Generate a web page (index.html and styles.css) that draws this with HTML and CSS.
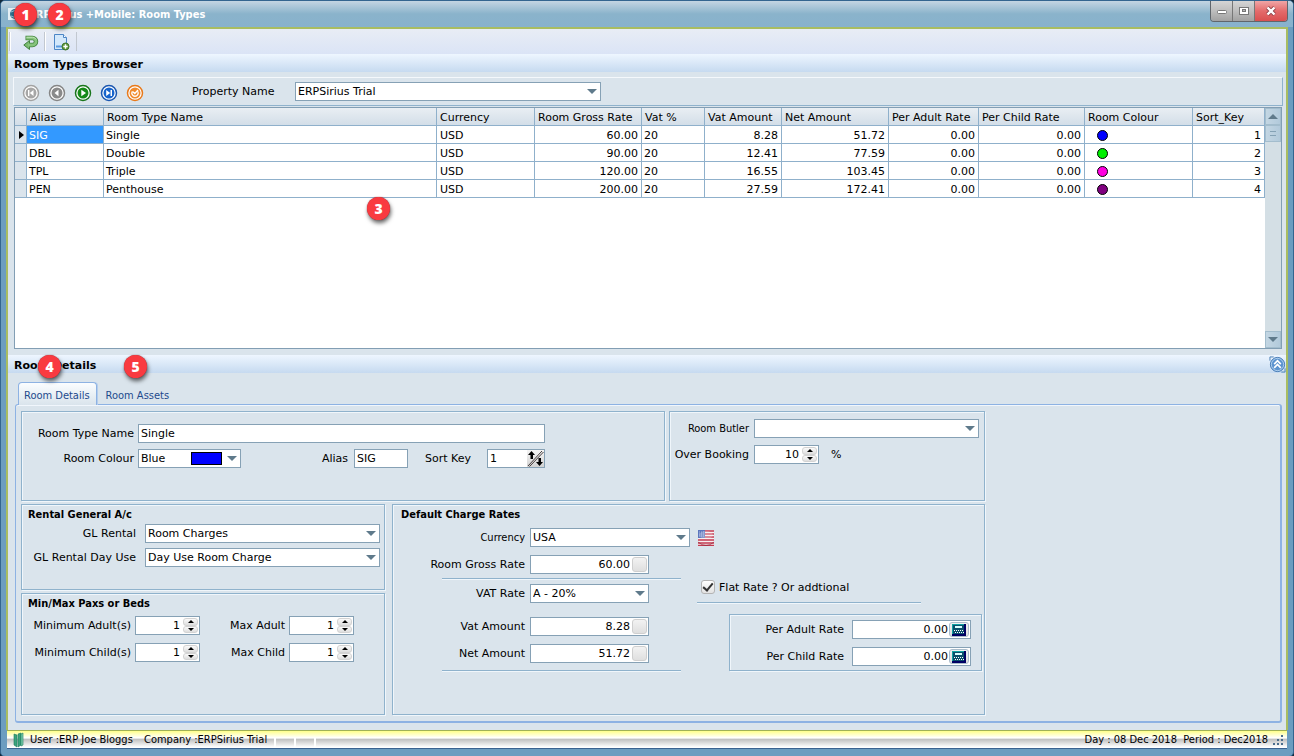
FILE: index.html
```html
<!DOCTYPE html>
<html lang="en">
<head>
<meta charset="UTF-8">
<meta name="viewport" content="width=device-width, initial-scale=1.0">
<title>ERPSirius +Mobile: Room Types</title>
<link rel="stylesheet" href="styles.css">
</head>
<body>
<div class="window">
    <header class="titlebar">
        <svg class="app-icon" width="16" height="16" viewBox="0 0 16 16">
            <rect x="1" y="2" width="14" height="12" fill="#e4eef4"/>
            <circle cx="8" cy="8" r="5" fill="#2f6f8c"/>
            <path d="M4 6q4-3 7 0M4 10q4 3 7 0" stroke="#9cc8da" fill="none"/>
        </svg>
        <h1>ERPSirius +Mobile: Room Types</h1>
        <span class="badge badge-1">1</span>
        <span class="badge badge-2">2</span>
        <div class="window-buttons">
            <button type="button" aria-label="Minimize"><svg width="12" height="12" viewBox="0 0 12 12"><rect x="1.5" y="5.5" width="9" height="3" rx="1" fill="#fff" stroke="#777"/></svg></button>
            <button type="button" aria-label="Maximize"><svg width="12" height="12" viewBox="0 0 12 12"><rect x="1.5" y="2.5" width="9" height="7" fill="#fff" stroke="#777"/><rect x="4.5" y="4.5" width="3" height="2" fill="#bbb" stroke="#777"/></svg></button>
            <button type="button" class="close" aria-label="Close"><svg width="12" height="12" viewBox="0 0 12 12"><path d="M2.500 2.500l7 7M9.500 2.500l-7 7" stroke="#8a4046" stroke-width="4"/><path d="M2.500 2.500l7 7M9.500 2.500l-7 7" stroke="#fff" stroke-width="2.400"/></svg></button>
        </div>
    </header>

    <main class="content">
        <div class="toolbar">
            <button type="button" aria-label="Back">
                <svg width="16" height="16" viewBox="0 0 16 16"><path d="M2.500 4H9.500a3.500 3.500 0 0 1 0 7H5" fill="none" stroke="#43823f" stroke-width="4.500"/><path d="M6.500 6.500V15.500L.8 11z" fill="#79ba6e" stroke="#43823f"/><path d="M3.200 4H9.500a3.500 3.500 0 0 1 0 7H5" fill="none" stroke="#86c47c" stroke-width="2.800"/><path d="M3.500 3.300H9.500a4 4 0 0 1 3.500 2" stroke="#bfe3b6" fill="none"/></svg>
            </button>
            <button type="button" aria-label="New room type">
                <svg width="18" height="18" viewBox="0 0 18 18"><path d="M2.500 1.500h9l3 3v12h-12z" fill="#d3e8fb" stroke="#4c86c6"/><path d="M11.500 1.500v3h3" fill="#fff" stroke="#4c86c6"/><path d="M4 13.500h7" stroke="#5a9ae0" stroke-width="2"/><circle cx="13.500" cy="13.500" r="3.500" fill="#5f9b3c" stroke="#3e742a"/><path d="M13.500 11.300v4.400M11.300 13.500h4.400" stroke="#fff" stroke-width="1.400"/></svg>
            </button>
        </div>

        <h2 class="section-header">Room Types Browser</h2>

        <div class="browser-bar">
            <div class="nav-buttons">
                <button type="button" aria-label="First"><svg width="18" height="18" viewBox="0 0 18 18"><circle cx="9" cy="9" r="7.500" fill="#fff" stroke="#a2a2a2" stroke-width="1.500"/><circle cx="9" cy="9" r="5.500" fill="#a6a6a6"/><path d="M11.500 6v6L7.800 9zM6 6h1.400v6H6z" fill="#fff"/></svg></button>
                <button type="button" aria-label="Previous"><svg width="18" height="18" viewBox="0 0 18 18"><circle cx="9" cy="9" r="7.500" fill="#fff" stroke="#858585" stroke-width="1.500"/><circle cx="9" cy="9" r="5.500" fill="#8a8a8a"/><path d="M10.500 5.700v6.600L6.500 9z" fill="#fff"/></svg></button>
                <button type="button" aria-label="Next"><svg width="18" height="18" viewBox="0 0 18 18"><circle cx="9" cy="9" r="7.500" fill="#fff" stroke="#18751b" stroke-width="1.500"/><circle cx="9" cy="9" r="5.500" fill="#158a18"/><path d="M7.300 5.700v6.600L12 9z" fill="#fff"/></svg></button>
                <button type="button" aria-label="Last"><svg width="18" height="18" viewBox="0 0 18 18"><circle cx="9" cy="9" r="7.500" fill="#fff" stroke="#1b57b0" stroke-width="1.500"/><circle cx="9" cy="9" r="5.500" fill="#1764cc"/><path d="M6.200 6v6l4-3zM10.500 6H12v6h-1.500z" fill="#fff"/></svg></button>
                <button type="button" aria-label="Refresh"><svg width="18" height="18" viewBox="0 0 18 18"><circle cx="9" cy="9" r="7.500" fill="#fff" stroke="#e8791a" stroke-width="1.500"/><circle cx="9" cy="9" r="5.500" fill="#f08a2c"/><path d="M6.200 7.500a3.200 3.200 0 1 0 5.600 0M6.500 7.500l2.300 2 3.200-3.500" stroke="#fff" stroke-width="1.300" fill="none"/></svg></button>
            </div>
            <label for="property">Property Name</label>
            <span class="select property-select"><select id="property"><option>ERPSirius Trial</option></select></span>
        </div>

        <div class="grid-box">
            <div class="grid-scroll">
                <table>
                    <colgroup>
                        <col class="col-mark"><col class="col-alias"><col class="col-name"><col class="col-currency"><col class="col-gross"><col class="col-vat"><col class="col-vat-amount"><col class="col-net"><col class="col-adult"><col class="col-child"><col class="col-colour"><col class="col-sort">
                    </colgroup>
                    <thead>
                        <tr><th></th><th>Alias</th><th>Room Type Name</th><th>Currency</th><th>Room Gross Rate</th><th>Vat %</th><th>Vat Amount</th><th>Net Amount</th><th>Per Adult Rate</th><th>Per Child Rate</th><th>Room Colour</th><th>Sort_Key</th></tr>
                    </thead>
                    <tbody>
                        <tr><td class="mark"><span class="current"></span></td><td class="selected">SIG</td><td>Single</td><td class="currency">USD</td><td class="num">60.00</td><td>20</td><td class="num">8.28</td><td class="num">51.72</td><td class="num">0.00</td><td class="num">0.00</td><td><span class="dot blue"></span></td><td class="num">1</td></tr>
                        <tr><td class="mark"></td><td>DBL</td><td>Double</td><td class="currency">USD</td><td class="num">90.00</td><td>20</td><td class="num">12.41</td><td class="num">77.59</td><td class="num">0.00</td><td class="num">0.00</td><td><span class="dot green"></span></td><td class="num">2</td></tr>
                        <tr><td class="mark"></td><td>TPL</td><td>Triple</td><td class="currency">USD</td><td class="num">120.00</td><td>20</td><td class="num">16.55</td><td class="num">103.45</td><td class="num">0.00</td><td class="num">0.00</td><td><span class="dot magenta"></span></td><td class="num">3</td></tr>
                        <tr><td class="mark"></td><td>PEN</td><td>Penthouse</td><td class="currency">USD</td><td class="num">200.00</td><td>20</td><td class="num">27.59</td><td class="num">172.41</td><td class="num">0.00</td><td class="num">0.00</td><td><span class="dot purple"></span></td><td class="num">4</td></tr>
                    </tbody>
                </table>
            </div>
            <div class="scrollbar">
                <button type="button" aria-label="Scroll up"><span class="arrow-up"></span></button>
                <span class="thumb"></span>
                <button type="button" class="scroll-down" aria-label="Scroll down"><span class="arrow-down"></span></button>
            </div>
            <span class="badge badge-3">3</span>
        </div>

        <div class="section-header details-header">
            <h2>Room Details</h2>
            <button type="button" aria-label="Collapse"><svg width="17" height="17" viewBox="0 0 18 18"><path d="M1 1h4M1 1v4M17 13v4h-4" stroke="#4a7fb4" fill="none"/><circle cx="9" cy="9" r="7.500" fill="#5b93cf" stroke="#3f76b2"/><circle cx="9" cy="9" r="6.500" fill="none" stroke="#b5d2ee"/><path d="M5.500 8.500L9 5l3.500 3.500M5.500 12.500L9 9l3.500 3.500" stroke="#fff" stroke-width="1.800" fill="none"/></svg></button>
            <span class="badge badge-4">4</span>
            <span class="badge badge-5">5</span>
        </div>

        <div class="tabs" role="tablist">
            <button type="button" role="tab" aria-selected="true" class="tab active">Room Details</button>
            <button type="button" role="tab" aria-selected="false" class="tab">Room Assets</button>
        </div>

        <div class="tab-panel" role="tabpanel">
            <form class="form">
                <div class="form-top">
                    <section class="panel general">
                        <div class="fields general-fields">
                            <label for="name">Room Type Name</label>
                            <input type="text" class="box" id="name" value="Single">
                            <label for="colour">Room Colour</label>
                            <div class="inline">
                                <span class="select colour-select"><select id="colour"><option>Blue</option></select><span class="swatch"></span></span>
                                <label for="alias" class="alias-label">Alias</label>
                                <input type="text" class="box alias" id="alias" value="SIG">
                                <label for="sort" class="sort-label">Sort Key</label>
                                <span class="box sort">
                                    <input type="text" id="sort" value="1">
                                    <button type="button" aria-label="Change sort key"><svg width="17" height="17" viewBox="0 0 17 17"><path d="M1 16L15 1M2.500 16.500L16.500 2" stroke="#443c3c"/><path d="M4.500 1L8 5H6v4H3.500V5H1zM12.500 16L16 12h-2V8h-2.500v4H9z" fill="#000"/></svg></button>
                                </span>
                            </div>
                        </div>
                    </section>
                    <section class="panel">
                        <div class="fields booking-fields">
                            <label for="butler" class="narrow">Room Butler</label>
                            <span class="select"><select id="butler"><option></option></select></span>
                            <label for="over">Over Booking</label>
                            <div class="inline">
                                <span class="box spin"><input type="text" id="over" value="10"><span class="spin-buttons"><button type="button" aria-label="Up"></button><button type="button" class="down" aria-label="Down"></button></span></span>
                                <span class="percent">%</span>
                            </div>
                        </div>
                    </section>
                </div>

                <div class="form-bottom">
                    <div class="form-left">
                        <section class="panel rental">
                            <h3>Rental General A/c</h3>
                            <div class="fields rental-fields">
                                <label for="gl">GL Rental</label>
                                <span class="select"><select id="gl"><option>Room Charges</option></select></span>
                                <label for="gl-day">GL Rental Day Use</label>
                                <span class="select"><select id="gl-day"><option>Day Use Room Charge</option></select></span>
                            </div>
                        </section>
                        <section class="panel beds">
                            <h3>Min/Max Paxs or Beds</h3>
                            <div class="fields beds-fields">
                                <label for="min-adult">Minimum Adult(s)</label>
                                <span class="box spin"><input type="text" id="min-adult" value="1"><span class="spin-buttons"><button type="button" aria-label="Up"></button><button type="button" class="down" aria-label="Down"></button></span></span>
                                <label for="max-adult">Max Adult</label>
                                <span class="box spin"><input type="text" id="max-adult" value="1"><span class="spin-buttons"><button type="button" aria-label="Up"></button><button type="button" class="down" aria-label="Down"></button></span></span>
                                <label for="min-child">Minimum Child(s)</label>
                                <span class="box spin"><input type="text" id="min-child" value="1"><span class="spin-buttons"><button type="button" aria-label="Up"></button><button type="button" class="down" aria-label="Down"></button></span></span>
                                <label for="max-child">Max Child</label>
                                <span class="box spin"><input type="text" id="max-child" value="1"><span class="spin-buttons"><button type="button" aria-label="Up"></button><button type="button" class="down" aria-label="Down"></button></span></span>
                            </div>
                        </section>
                    </div>

                    <section class="panel rates">
                        <h3>Default Charge Rates</h3>
                        <div class="fields rate-fields currency-row">
                            <label for="currency" class="narrow">Currency</label>
                            <div class="inline">
                                <span class="select currency-select"><select id="currency"><option>USA</option></select></span>
                                <svg class="flag" width="16" height="16" viewBox="0 0 16 16"><rect width="16" height="16" fill="#f6eef0"/><path d="M0 1h16M0 4h16M0 7h16M0 10h16M0 13h16M0 15.500h16" stroke="#c23a50" stroke-width="1.500"/><rect width="7" height="8" fill="#5c76bd"/><path d="M1 2h5M1 4h5M1 6h5" stroke="#a9b8e2" stroke-dasharray="1 1"/><path d="M0 12q8 7 16 0" stroke="#8d2738" stroke-opacity=".6" fill="none"/><ellipse cx="8" cy="5" rx="7" ry="4" fill="#fff" fill-opacity=".25"/></svg>
                            </div>
                        </div>
                        <div class="rates-body">
                            <div class="rates-left">
                                <div class="fields rate-fields">
                                    <label for="gross">Room Gross Rate</label>
                                    <span class="box money"><input type="text" id="gross" value="60.00"><button type="button" aria-label="Calculate gross rate"></button></span>
                                </div>
                                <hr>
                                <div class="fields rate-fields">
                                    <label for="vat-rate">VAT Rate</label>
                                    <span class="select vat-select"><select id="vat-rate"><option>A - 20%</option></select></span>
                                </div>
                                <div class="fields rate-fields amounts">
                                    <label for="vat">Vat Amount</label>
                                    <span class="box money"><input type="text" id="vat" value="8.28"><button type="button" aria-label="Calculate vat"></button></span>
                                    <label for="net">Net Amount</label>
                                    <span class="box money"><input type="text" id="net" value="51.72"><button type="button" aria-label="Calculate net"></button></span>
                                </div>
                                <hr>
                            </div>
                            <div class="rates-right">
                                <label class="check"><input type="checkbox" checked>Flat Rate ? Or addtional</label>
                                <hr>
                                <div class="panel per-person">
                                    <div class="fields person-fields">
                                        <label for="adult">Per Adult Rate</label>
                                        <span class="box money calc"><input type="text" id="adult" value="0.00"><button type="button" aria-label="Calculator"><svg width="14" height="12" viewBox="0 0 14 12"><rect width="14" height="12" fill="#000064"/><rect width="12" height="10" fill="#0fa3a3"/><rect x="1" y="1" width="11" height="9" fill="#0a4f6b"/><rect x="3" y="2" width="7" height="2" fill="#d8ffff"/><path d="M2 6.500h9M3 8.500h9" stroke="#fff" stroke-dasharray="1 1"/></svg></button></span>
                                        <label for="child">Per Child Rate</label>
                                        <span class="box money calc"><input type="text" id="child" value="0.00"><button type="button" aria-label="Calculator"><svg width="14" height="12" viewBox="0 0 14 12"><rect width="14" height="12" fill="#000064"/><rect width="12" height="10" fill="#0fa3a3"/><rect x="1" y="1" width="11" height="9" fill="#0a4f6b"/><rect x="3" y="2" width="7" height="2" fill="#d8ffff"/><path d="M2 6.500h9M3 8.500h9" stroke="#fff" stroke-dasharray="1 1"/></svg></button></span>
                                    </div>
                                </div>
                            </div>
                        </div>
                    </section>
                </div>
            </form>
        </div>
    </main>

    <footer class="statusbar">
        <svg width="12" height="16" viewBox="0 0 12 16"><path d="M1 2l3 1v12l-3-2zM5 2l3-1v12l-3 2z" fill="#3ba37c" stroke="#1d7a5a" stroke-width=".6"/><path d="M8 2l2-1v12l-2 1z" fill="#7fd0b0" stroke="#1d7a5a" stroke-width=".6"/></svg>
        <span class="user">User :ERP Joe Bloggs</span>
        <span class="company">Company :ERPSirius Trial</span>
        <span class="cell"></span><span class="cell"></span><span class="cell"></span>
        <span class="period">Day : 08 Dec 2018&nbsp; Period : Dec2018</span>
        <svg width="12" height="12" viewBox="0 0 12 12"><path d="M9 1h2v2H9zM5 5h2v2H5zM9 5h2v2H9zM1 9h2v2H1zM5 9h2v2H5zM9 9h2v2H9z" fill="#4a6d8c"/></svg>
    </footer>
</div>
</body>
</html>
```
FILE: styles.css
```css
* {
    box-sizing: border-box;
}
body {
    margin: 0;
    background-color: #12283a;
    font-family: "DejaVu Sans", sans-serif;
    font-size: 11px;
    line-height: 13px;
    color: #000;
}
h1, h2, h3 {
    margin: 0;
    font-size: 11px;
    line-height: 13px;
}
button, input, select {
    font: inherit;
    color: inherit;
    margin: 0;
    padding: 0;
}
button {
    border: none;
    background: none;
    display: flex;
    align-items: center;
    justify-content: center;
}
svg {
    display: block;
    flex: none;
}

/* window frame */
.window {
    min-height: 100vh;
    display: flex;
    flex-direction: column;
    padding: 0 5px 7px;
    border: 1px solid #34658f;
    border-radius: 5px;
    background-color: #6c9dc0;
}
.titlebar {
    position: relative;
    display: flex;
    align-items: center;
    gap: 6px;
    height: 26px;
    margin: 0 -5px;
    padding-left: 6px;
    border-radius: 4px 4px 0 0;
    background: linear-gradient(#c4d5e2, #8ab3cb 50%, #88b2cd);
}
.titlebar h1 {
    font-family: "DejaVu Sans Condensed", "DejaVu Sans", sans-serif;
    font-stretch: condensed;
    color: #fff;
    flex: 1;
}
.window-buttons {
    display: flex;
    align-self: flex-start;
    margin-right: 5px;
    border: 1px solid #60666c;
    border-top: none;
    border-radius: 0 0 4px 4px;
    overflow: hidden;
}
.window-buttons button {
    width: 22px;
    height: 20px;
    border-right: 1px solid #777;
    background: linear-gradient(#d5d5d5, #bdbdbd 50%, #a2a2a2);
}
.window-buttons .close {
    width: 32px;
    border-right: none;
    background: linear-gradient(#f0a6a6, #e46b6b 50%, #d95050);
}
.badge {
    position: absolute;
    z-index: 2;
    width: 23px;
    height: 23px;
    border-radius: 50%;
    background-color: #f93a40;
    box-shadow: 0 0 1px #7c2024, 1px 3px 4px rgba(0, 0, 0, 0.6);
    color: #fff;
    font: 800 14px/23px "Open Sans", sans-serif;
    text-align: center;
}
.badge-1 {
    left: 13px;
    top: 2px;
}
.badge-2 {
    left: 47px;
    top: 2px;
}
.badge-3 {
    left: 352px;
    top: 89px;
}
.badge-4 {
    left: 30px;
    top: 0;
}
.badge-5 {
    left: 116px;
    top: 0;
}
.content {
    flex: 1;
    display: flex;
    flex-direction: column;
    border: 2px solid #a9bd62;
    border-bottom: none;
    background-color: #dae4ec;
    padding-bottom: 7px;
}

/* toolbar and headers */
.toolbar {
    display: flex;
    align-items: center;
    height: 25px;
    padding-left: 1px;
    background: linear-gradient(#e8edf5, #dbe4f6);
}
.toolbar::before {
    content: "";
    width: 1px;
    height: 19px;
    background-color: #c2c8d0;
}
.toolbar button {
    height: 19px;
    border-right: 1px solid #c2c8d0;
    border-left: 1px solid #fff;
    padding: 0 6px;
}
.toolbar button:first-child {
    padding: 0 5px 0 12px;
}
.section-header {
    height: 18px;
    padding-left: 6px;
    line-height: 22px;
    background: linear-gradient(#eef6ff, #c6daf0);
}
.details-header {
    position: relative;
    display: flex;
    justify-content: space-between;
    margin-top: 6px;
}
.details-header h2 {
    line-height: 22px;
}

/* room types browser */
.browser-bar {
    display: flex;
    align-items: center;
    height: 29px;
    margin: 5px 3px 1px 5px;
    padding-left: 8px;
    border: 1px solid #8fb2cc;
    border-top-color: #f4f8fc;
    border-left-color: #f4f8fc;
}
.browser-bar label {
    margin: 0 12px 0 48px;
    min-width: 91px;
}
.nav-buttons {
    display: flex;
    gap: 8px;
    padding-top: 2px;
}
.grid-box {
    position: relative;
    flex: 1;
    display: flex;
    min-height: 242px;
    margin: 0 4px 0 6px;
    border: 1px solid #829eb4;
    background-color: #fff;
}
.grid-scroll {
    flex: 1;
    overflow: hidden;
}
table {
    width: 100%;
    table-layout: fixed;
    border-collapse: separate;
    border-spacing: 0;
}
th, td {
    height: 18px;
    padding: 2px 3px 0 2px;
    border-right: 1px solid #8fb0cb;
    border-bottom: 1px solid #8fb0cb;
    line-height: 15px;
    white-space: nowrap;
    overflow: hidden;
}
th {
    padding: 2px 0 0 3px;
    font-weight: normal;
    text-align: left;
    background: linear-gradient(#e9eef3, #d3dee8);
}
.col-mark { width: 12px; }
.col-alias { width: 77px; }
.col-currency { width: 98px; }
.col-gross { width: 107px; }
.col-vat { width: 63px; }
.col-vat-amount { width: 77px; }
.col-net { width: 107px; }
.col-adult { width: 90px; }
.col-child { width: 106px; }
.col-colour { width: 108px; }
.col-sort { width: 72px; }
.num {
    text-align: right;
}
.currency {
    padding-left: 3px;
}
.mark {
    padding: 0 0 0 4px;
    background-color: #dae4ec;
}
.current {
    display: block;
    width: 5px;
    border: 4px solid transparent;
    border-left: 5px solid #000;
    border-right: none;
}
.selected {
    background-color: #3399ff;
    color: #fff;
}
.dot {
    display: block;
    width: 11px;
    height: 11px;
    margin-left: 10px;
    border: 1px solid #000;
    border-radius: 50%;
}
.blue { background-color: #0000ff; }
.green { background-color: #00f000; }
.magenta { background-color: #ff00e0; }
.purple { background-color: #800080; }
.scrollbar {
    display: flex;
    flex-direction: column;
    width: 16px;
    background-color: #d4dfe5;
}
.scrollbar button, .thumb {
    height: 17px;
    border: 1px solid #a3bdcd;
    background: linear-gradient(90deg, #c3d6e3, #b2cadb);
}
.thumb {
    display: flex;
    flex-direction: column;
    justify-content: center;
    gap: 3px;
    padding: 0 4px;
}
.thumb::before, .thumb::after {
    content: "";
    height: 1px;
    background-color: #84a2b5;
}
.scrollbar .scroll-down {
    margin-top: auto;
}
.arrow-up, .arrow-down {
    border: 5px solid transparent;
}
.arrow-up {
    border-top: none;
    border-bottom-color: #5f7a8b;
}
.arrow-down {
    border-bottom: none;
    border-top-color: #5f7a8b;
}

/* tabs */
.tabs {
    display: flex;
    align-items: flex-end;
    height: 31px;
    padding-left: 10px;
}
.tab {
    height: 22px;
    padding: 4px 9px 0;
    font-family: "DejaVu Sans Condensed", "DejaVu Sans", sans-serif;
    font-stretch: condensed;
    color: #1e4a8c;
}
.tab.active {
    position: relative;
    z-index: 1;
    height: 23px;
    margin-bottom: -1px;
    padding: 2px 6px 0 5px;
    border: 1px solid #8db2e3;
    border-bottom: none;
    border-radius: 4px 4px 0 0;
    box-shadow: 1px 0 0 #b4cdec;
    background: linear-gradient(#fbfdff, #dae4ec);
}
.tab-panel {
    margin: 0 4px 0 7px;
    padding: 6px 5px;
    border: 1px solid #8db2e3;
    border-right-width: 2px;
    border-bottom-width: 2px;
    border-radius: 3px;
    box-shadow: inset 0 1px 0 #f1f6fc;
}

/* form */
.form {
    max-width: 964px;
    display: flex;
    flex-direction: column;
    gap: 3px;
}
.form-top {
    display: grid;
    grid-template-columns: 644fr 316fr;
    gap: 4px;
}
.form-bottom {
    display: grid;
    grid-template-columns: 364fr 593fr;
    gap: 7px;
}
.form-left {
    display: flex;
    flex-direction: column;
    gap: 3px;
}
.panel {
    border: 1px solid #8fb2cc;
    box-shadow: inset 1px 1px 0 #f0f6fb, 1px 1px 0 #f0f6fb;
}
.panel h3 {
    padding: 3px 6px;
    font-family: "DejaVu Sans Condensed", "DejaVu Sans", sans-serif;
    font-stretch: condensed;
}
.fields {
    display: grid;
    align-items: center;
}
.fields > label {
    text-align: right;
    white-space: nowrap;
}
.narrow {
    font-family: "DejaVu Sans Condensed", "DejaVu Sans", sans-serif;
    font-stretch: condensed;
}
.inline {
    display: flex;
    align-items: center;
}
.box, .select {
    display: flex;
    height: 19px;
    border: 1px solid #86a1b5;
    background-color: #fff;
}
input.box {
    padding: 0 2px;
}
.box input {
    flex: 1;
    width: 0;
    border: none;
    background: none;
    padding: 0 2px;
}
.select {
    position: relative;
}
.select select {
    flex: 1;
    width: 100%;
    border: none;
    background: none;
    appearance: none;
    padding: 0 18px 0 2px;
}
.select::after {
    content: "";
    position: absolute;
    right: 3px;
    top: 6px;
    border: 5px solid transparent;
    border-top-color: #5f7a8b;
    border-bottom: none;
    pointer-events: none;
}
.property-select {
    width: 306px;
}
.general {
    padding: 12px 0 32px;
}
.general-fields {
    grid-template-columns: 112px 407px;
    gap: 6px 4px;
}
.colour-select {
    width: 103px;
}
.swatch {
    position: absolute;
    right: 18px;
    top: 2px;
    width: 31px;
    height: 13px;
    border: 1px solid #000;
    background-color: #0000ff;
}
.alias-label {
    margin-left: auto;
}
.alias {
    width: 54px;
    margin: 0 17px 0 6px;
}
.sort-label {
    min-width: 50px;
}
.sort {
    width: 58px;
    margin-left: 12px;
}
.sort button {
    background: linear-gradient(#f5f5f5, #d2d2d2);
}
.booking-fields {
    grid-template-columns: 79px 225px;
    gap: 7px 5px;
    padding-top: 7px;
}
.spin {
    width: 65px;
    padding: 1px;
}
.spin input, .money input {
    text-align: right;
}
.spin input {
    padding-right: 3px;
}
.spin-buttons {
    display: flex;
    flex-direction: column;
    width: 15px;
}
.spin-buttons button {
    flex: 1;
    border: 1px solid #d3d3d3;
    border-radius: 3px;
    background: linear-gradient(#fafafa, #dedede);
}
.spin-buttons button::before {
    content: "";
    border: 3px solid transparent;
    border-top: none;
    border-bottom-color: #000;
}
.spin-buttons .down::before {
    border-top: 3px solid #000;
    border-bottom: none;
}
.percent {
    margin-left: 12px;
}
.rental {
    padding-bottom: 22px;
}
.rental-fields {
    grid-template-columns: 114px 235px;
    gap: 5px 9px;
}
.beds {
    flex: 1;
}
.beds h3 {
    padding-bottom: 6px;
}
.beds-fields {
    grid-template-columns: 109px 65px 81px 65px;
    gap: 8px 4px;
}
.rates {
    padding-bottom: 38px;
}
.rates h3 {
    padding: 3px 8px 7px;
}
.rate-fields {
    grid-template-columns: 132px 1fr;
    gap: 8px 5px;
}
.currency-select {
    width: 160px;
}
.flag {
    margin-left: 8px;
}
.rates-body {
    display: flex;
    padding-top: 8px;
}
.rates-left {
    width: 304px;
}
hr {
    height: 2px;
    margin: 0;
    border: none;
    border-top: 1px solid #8fb2cc;
    border-bottom: 1px solid #f0f6fb;
}
.rates-left hr {
    margin: 4px 16px 4px 49px;
}
.vat-select, .money {
    width: 119px;
}
.amounts {
    margin: 14px 0 7px;
}
.money {
    padding: 1px;
}
.money button {
    width: 15px;
    border: 1px solid #cfcfcf;
    border-radius: 3px;
    background: linear-gradient(#f2f2f2, #dfdfdf);
}
.money.calc button {
    width: 20px;
    border-color: #a9bccb;
}
.calc input {
    padding-right: 1px;
}
.rates-right {
    flex: 1;
    padding-top: 25px;
}
.check {
    display: flex;
    align-items: center;
    gap: 4px;
    padding-left: 4px;
}
.check input {
    appearance: none;
    display: flex;
    align-items: center;
    justify-content: center;
    width: 14px;
    height: 14px;
    border: 1px solid #b4b4b4;
    border-radius: 3px;
    background: linear-gradient(#fff, #e2e2e2);
}
.check input:checked::before {
    content: "";
    width: 4px;
    height: 8px;
    margin-bottom: 2px;
    border: solid #333;
    border-width: 0 2px 2px 0;
    transform: rotate(40deg);
}
.rates-right hr {
    width: 224px;
    margin: 8px 0 10px;
}
.per-person {
    margin: 0 2px 0 32px;
    padding: 5px 0 4px;
}
.person-fields {
    grid-template-columns: 114px 119px;
    gap: 8px;
}

/* status bar */
.statusbar {
    display: flex;
    align-items: center;
    height: 19px;
    margin: 0 1px;
    padding: 0 3px 0 6px;
    border-top: 1px solid #9fb156;
    border-bottom: 1px solid #3b6290;
    background: linear-gradient(#ffff8a, #fff 40%, #c2c2c2 50%, #fff 95%);
    font-family: "DejaVu Sans Condensed", "DejaVu Sans", sans-serif;
    font-stretch: condensed;
}
.user {
    width: 119px;
    padding-left: 5px;
}
.company {
    width: 130px;
}
.cell {
    width: 20px;
    height: 10px;
    align-self: flex-end;
    border-left: 2px solid #fff;
}
.period {
    margin: 0 4px 0 auto;
}
```
